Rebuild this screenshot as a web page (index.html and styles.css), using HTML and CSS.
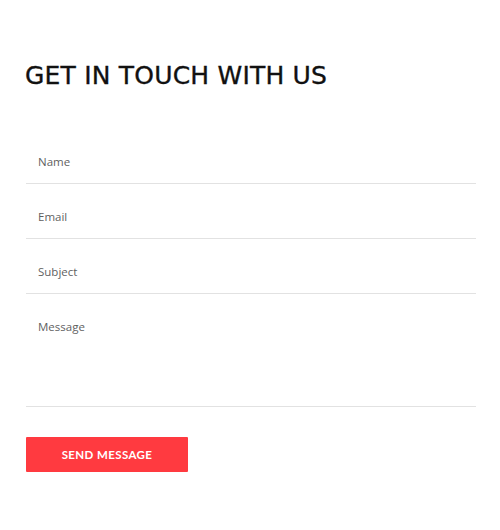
FILE: index.html
```html
<!DOCTYPE html>
<html>
<head>
<meta charset="utf-8">
<link rel="stylesheet" href="styles.css">
</head>
<body>
<div class="contact">
  <h1 class="title">GET IN TOUCH WITH US</h1>
  <form class="form">
    <input class="field" type="text" placeholder="Name">
    <input class="field" type="text" placeholder="Email">
    <input class="field" type="text" placeholder="Subject">
    <textarea class="field area" placeholder="Message"></textarea>
    <button class="send" type="button">SEND MESSAGE</button>
  </form>
</div>
</body>
</html>
```
FILE: styles.css
```css
html, body { margin: 0; padding: 0; background: #fff; }
.contact { padding: 60px 24px 0 26px; width: 450px; }
.title {
  margin: 0;
  font-family: "DejaVu Sans", sans-serif;
  font-weight: 500;
  font-size: 25px;
  line-height: 32px;
  letter-spacing: 0.2px;
  color: #111;
  margin-left: -1px;
  -webkit-text-stroke: 0.35px #111;
}
.form { display: flex; flex-direction: column; margin-top: 37px; }
.field {
  display: block;
  box-sizing: border-box;
  width: 450px;
  height: 55px;
  margin: 0;
  padding: 24px 12px 13px;
  border: 0;
  border-bottom: 1px solid #e2e2e2;
  font-family: "Open Sans", sans-serif;
  font-size: 11.5px;
  line-height: 17px;
  color: #555;
  outline: none;
  background: transparent;
}
.field::placeholder { color: #5f5f5f; opacity: 1; }
.area { height: 113px; resize: none; }
.send {
  margin-top: 30px;
  width: 162px;
  height: 35px;
  border: 0;
  border-radius: 1px;
  background: #ff3a40;
  color: #fff;
  font-family: "Lato", sans-serif;
  font-weight: 700;
  font-size: 11.5px;
  letter-spacing: 0.4px;
  padding: 0;
}
```
